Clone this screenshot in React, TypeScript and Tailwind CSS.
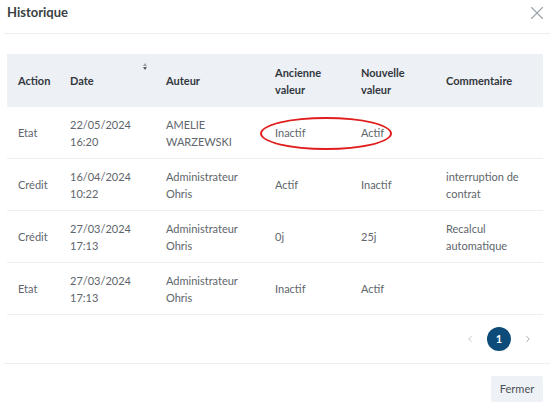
import { X, ChevronLeft, ChevronRight } from 'lucide-react';

const rows = [
  { action: 'Etat', date: '22/05/2024', time: '16:20', author: ['AMELIE', 'WARZEWSKI'], before: 'Inactif', after: 'Actif', comment: '', highlight: true },
  { action: 'Crédit', date: '16/04/2024', time: '10:22', author: ['Administrateur', 'Ohris'], before: 'Actif', after: 'Inactif', comment: 'interruption de contrat' },
  { action: 'Crédit', date: '27/03/2024', time: '17:13', author: ['Administrateur', 'Ohris'], before: '0j', after: '25j', comment: 'Recalcul automatique' },
  { action: 'Etat', date: '27/03/2024', time: '17:13', author: ['Administrateur', 'Ohris'], before: 'Inactif', after: 'Actif', comment: '' },
];

const cols = 'grid grid-cols-[52px_96px_109px_86px_85px_1fr] items-center';

export default function App() {
  return (
    <div className="w-[550px] h-[406px] bg-white text-[11px] text-[#60666c]" style={{ fontFamily: 'Lato, "Noto Sans", sans-serif' }}>
      {/* Header */}
      <div className="h-[34px] ml-[4px] border-b border-[#eceef2] flex items-center justify-between pl-[3px] pr-[2px]">
        <h2 className="text-[13px] font-bold text-[#3a3f45] -mt-[8px]">Historique</h2>
        <X className="w-[22px] h-[22px] text-[#9aa2ab] -mt-[8px]" strokeWidth={1.2} />
      </div>

      {/* Table */}
      <div className="mx-[7px] mt-[20px]">
        <div className={`${cols} h-[53px] bg-[#edf0f4] font-bold text-[#33383e] leading-[17px]`}>
          <div className="pl-[11px]">Action</div>
          <div className="pl-[11px] relative">
            Date
            <span className="absolute left-[84px] -top-[9px] flex flex-col items-center gap-[1px]">
              <span className="w-0 h-0 border-x-[2px] border-x-transparent border-b-[3px] border-b-[#9aa2ab]" />
              <span className="w-0 h-0 border-x-[2px] border-x-transparent border-t-[3px] border-t-[#555b62]" />
            </span>
          </div>
          <div className="pl-[11px]">Auteur</div>
          <div className="pl-[11px]">Ancienne<br />valeur</div>
          <div className="pl-[11px]">Nouvelle<br />valeur</div>
          <div className="pl-[11px]">Commentaire</div>
        </div>

        {rows.map((r, i) => (
          <div key={i} className={`${cols} h-[52px] border-b border-[#eceef2] leading-[17px] relative`}>
            <div className="pl-[11px]">{r.action}</div>
            <div className="pl-[11px]">{r.date}<br />{r.time}</div>
            <div className="pl-[11px]">{r.author[0]}<br />{r.author[1]}</div>
            <div className="pl-[11px]">{r.before}</div>
            <div className="pl-[11px]">{r.after}</div>
            <div className="pl-[11px] pr-[20px]">{r.comment}</div>
            {r.highlight && (
              <span className="absolute left-[253px] top-[10px] w-[132px] h-[33px] rounded-[50%] border-2 border-[#e11d1d]" />
            )}
          </div>
        ))}

        {/* Pagination */}
        <div className="h-[48px] flex items-center justify-end gap-[12px] pr-[10px]">
          <ChevronLeft className="w-[10px] h-[10px] text-[#b5bcc4]" strokeWidth={2} />
          <span className="w-[24px] h-[24px] rounded-full bg-[#0d4c7a] text-white font-bold flex items-center justify-center">1</span>
          <ChevronRight className="w-[10px] h-[10px] text-[#8d959e]" strokeWidth={2} />
        </div>
      </div>

      {/* Footer */}
      <div className="ml-[4px] border-t border-[#eceef2] flex justify-end pr-[7px] pt-[12px]">
        <button className="w-[52px] h-[26px] bg-[#eef1f5] rounded-[2px] text-[#4a5057] text-[11px]">Fermer</button>
      </div>
    </div>
  );
}
